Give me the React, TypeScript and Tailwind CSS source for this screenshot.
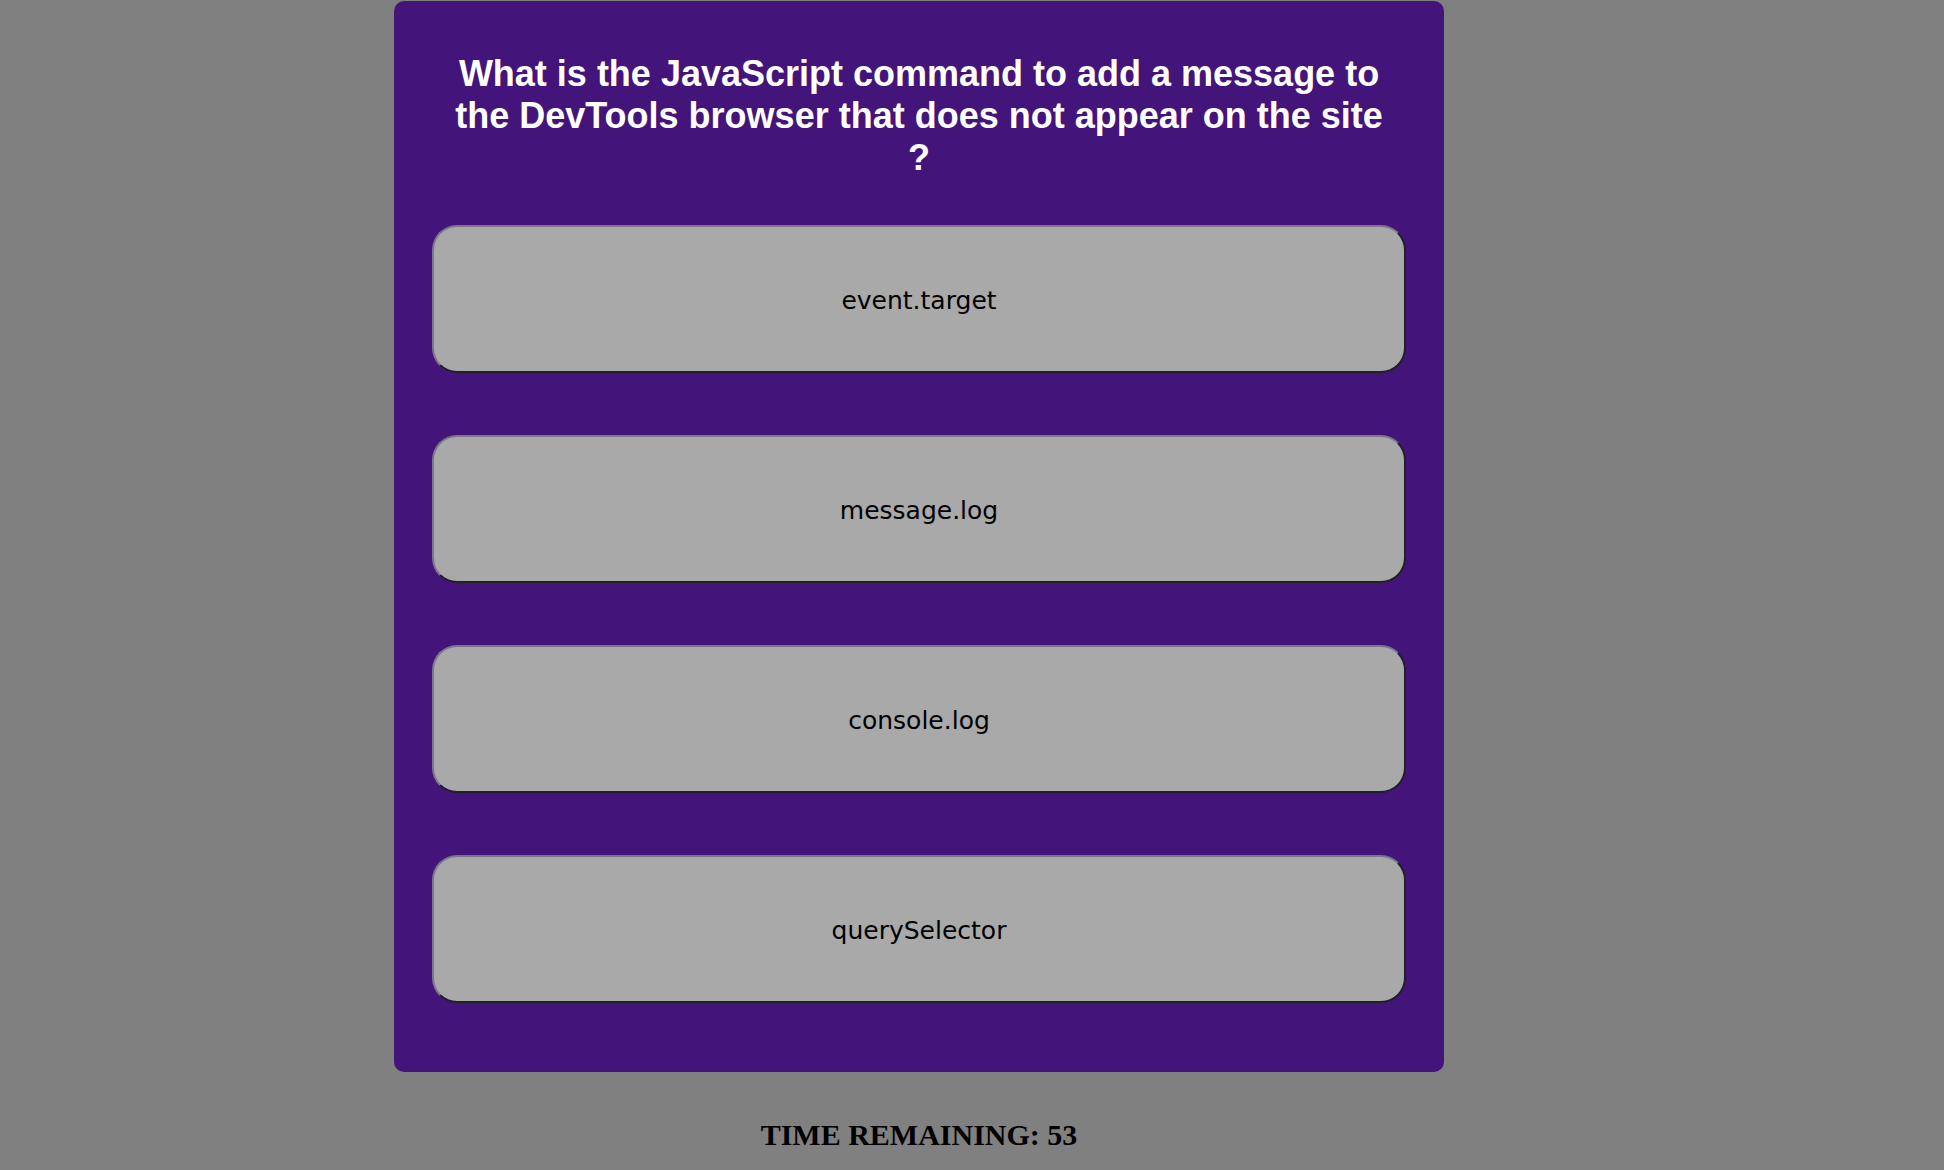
const answers = ["event.target", "message.log", "console.log", "querySelector"];

export default function App() {
  return (
    <div className="min-h-screen bg-[#808080]">
      <div className="ml-[394px] flex w-[1050px] flex-col items-center">
        <div className="mt-[1px] w-full rounded-[10px] bg-[#43157a] pt-[52px] pb-[69px] px-[38px]">
          <h1 className="mx-auto w-[950px] text-center font-['Liberation_Sans',Arial,sans-serif] text-[36px] font-bold leading-[42px] text-white">
            What is the JavaScript command to add a message to the DevTools browser that does not appear on the site ?
          </h1>
          <div className="mt-[46px] flex flex-col gap-[62px]">
            {answers.map((a) => (
              <button
                key={a}
                className="h-[148px] w-full rounded-[25px] border-2 border-t-[#7d7688] border-l-[#7d7688] border-r-[#231f27] border-b-[#231f27] bg-[#a9a9a9] pt-[4px] font-['DejaVu_Sans',Verdana,sans-serif] text-[25px] text-black"
              >
                {a}
              </button>
            ))}
          </div>
        </div>
        <div className="mt-[46px] font-['Liberation_Serif','Times_New_Roman',serif] text-[30px] font-bold leading-[34.5px] text-black">
          TIME REMAINING: 53
        </div>
      </div>
    </div>
  );
}
